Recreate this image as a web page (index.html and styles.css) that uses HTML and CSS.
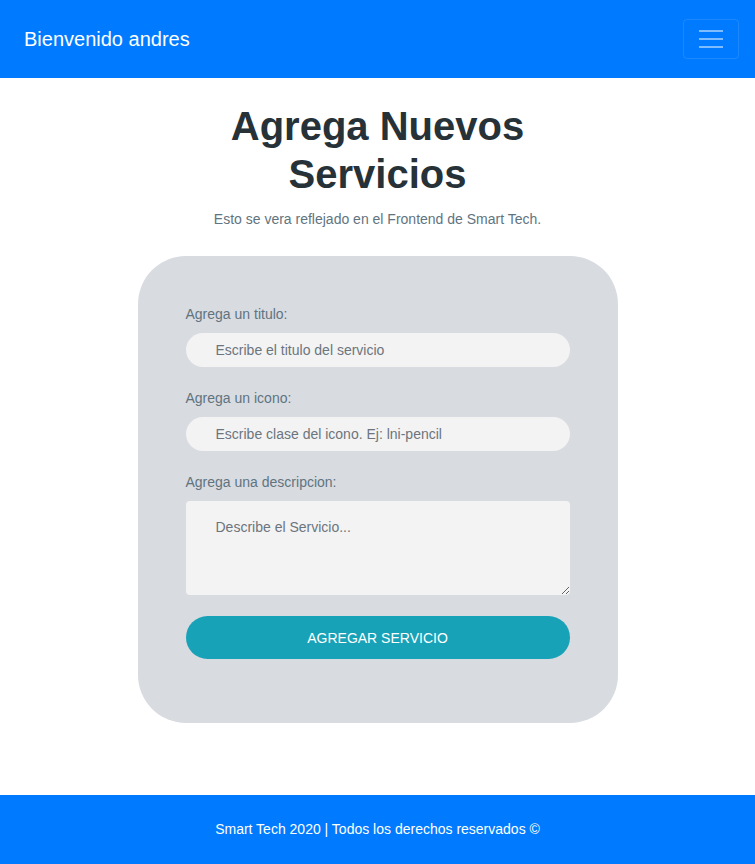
FILE: index.html
```html
<!DOCTYPE html>
<html lang="es">
<head>
<meta charset="utf-8">
<title>Agrega Nuevos Servicios</title>
<link rel="stylesheet" href="styles.css">
</head>
<body>
<nav class="navbar">
  <span class="brand">Bienvenido andres</span>
  <button class="toggler" type="button" aria-label="Menu">
    <svg width="24" height="18" viewBox="0 0 24 18"><path d="M0 1h24M0 9h24M0 17h24" stroke="rgba(255,255,255,0.5)" stroke-width="2"/></svg>
  </button>
</nav>
<main class="main">
  <h1 class="title">Agrega Nuevos<br>Servicios</h1>
  <p class="subtitle">Esto se vera reflejado en el Frontend de Smart Tech.</p>
  <form class="card">
    <div class="group">
      <label class="label">Agrega un titulo:</label>
      <input class="field" type="text" placeholder="Escribe el titulo del servicio">
    </div>
    <div class="group">
      <label class="label">Agrega un icono:</label>
      <input class="field" type="text" placeholder="Escribe clase del icono. Ej: lni-pencil">
    </div>
    <div class="group">
      <label class="label">Agrega una descripcion:</label>
      <textarea class="area" placeholder="Describe el Servicio..."></textarea>
    </div>
    <button class="submit" type="button">AGREGAR SERVICIO</button>
  </form>
</main>
<footer class="footer">Smart Tech 2020 | Todos los derechos reservados ©</footer>
</body>
</html>
```
FILE: styles.css
```css
* { box-sizing: border-box; }
body {
  margin: 0;
  font-family: "Liberation Sans", Arial, sans-serif;
  font-size: 14px;
  line-height: 1.5;
  color: #212529;
  background: #fff;
}
.navbar {
  height: 78px;
  background: #007bff;
  display: flex;
  align-items: center;
  justify-content: space-between;
  padding: 0 16px 0 24px;
}
.brand {
  color: #fff;
  font-size: 20px;
  line-height: 30px;
}
.toggler {
  width: 56px;
  height: 40px;
  background: transparent;
  border: 1px solid rgba(255,255,255,0.1);
  border-radius: 4px;
  display: flex;
  align-items: center;
  justify-content: center;
  padding: 0;
  margin-top: -1px;
}
.main {
  display: flex;
  flex-direction: column;
  align-items: center;
  padding-top: 24px;
  padding-bottom: 72px;
}
.title {
  margin: 0;
  font-size: 40px;
  line-height: 48px;
  font-weight: 700;
  color: #263238;
  text-align: center;
}
.subtitle {
  margin: 11px 0 26px;
  color: #5f7480;
  font-size: 14px;
  line-height: 21px;
}
.card {
  width: 480px;
  background: #d8dbe0;
  border-radius: 48px;
  padding: 48px 48px 64px;
  display: flex;
  flex-direction: column;
}
.group {
  display: flex;
  flex-direction: column;
  margin-bottom: 21px;
}
.group-last { margin-bottom: 20px; }
.label {
  color: #5f7480;
  font-size: 14px;
  line-height: 21px;
  margin-bottom: 8px;
}
.field {
  height: 34px;
  border: none;
  border-radius: 17px;
  background: #f3f3f4;
  padding: 0 30px;
  font-family: inherit;
  font-size: 14px;
  color: #495057;
  outline: none;
}
.field::placeholder, .area::placeholder { color: #6c757d; opacity: 1; }
.area {
  height: 94px;
  border: none;
  border-radius: 4px;
  background: #f3f3f4;
  padding: 16px 30px;
  font-family: inherit;
  font-size: 14px;
  line-height: 21px;
  color: #495057;
  outline: none;
  resize: vertical;
}
.submit {
  height: 43px;
  border: none;
  border-radius: 22px;
  background: #17a2b8;
  color: #fff;
  font-family: inherit;
  font-size: 14px;
  padding: 0;
}
.footer {
  height: 69px;
  background: #007bff;
  color: #fff;
  display: flex;
  align-items: center;
  justify-content: center;
  font-size: 14px;
}
```
